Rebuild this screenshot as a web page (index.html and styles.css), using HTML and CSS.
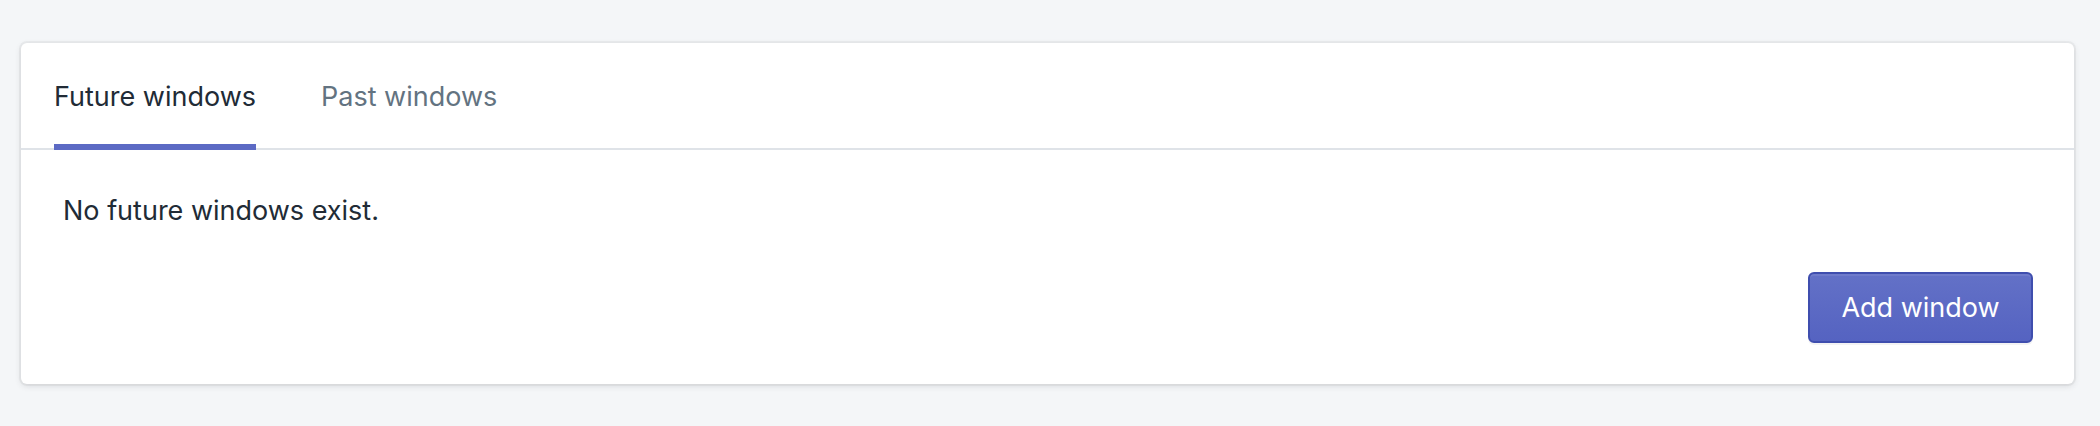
FILE: index.html
```html
<!DOCTYPE html>
<html>
<head>
<meta charset="utf-8">
<link rel="stylesheet" href="styles.css">
</head>
<body>
  <div class="page">
    <div class="card">
      <ul class="tabs">
        <li class="tab tab-selected"><span class="tab-title">Future windows</span></li>
        <li class="tab"><span class="tab-title">Past windows</span></li>
      </ul>
      <div class="section">
        <p class="empty">No future windows exist.</p>
        <div class="actions">
          <button class="btn-primary" type="button">Add window</button>
        </div>
      </div>
    </div>
  </div>
</body>
</html>
```
FILE: styles.css
```css
html, body {
  margin: 0;
  padding: 0;
  background: #f4f6f8;
}
body {
  font-family: Inter, "Noto Sans", "Liberation Sans", sans-serif;
  color: #212b36;
  width: 2100px;
  height: 426px;
  overflow: hidden;
}
.page {
  padding: 43px 26px 0 21px;
}
.card {
  background: #ffffff;
  border-radius: 6px;
  box-shadow: 0 0 0 2px rgba(63, 63, 68, 0.05), 0 2px 6px rgba(63, 63, 68, 0.15);
}
.tabs {
  list-style: none;
  margin: 0;
  padding: 0 0 0 33px;
  display: flex;
  gap: 65px;
  border-bottom: 2px solid #dfe3e8;
}
.tab {
  font-size: 27px;
  line-height: 40px;
  color: #637381;
  padding-top: 34px;
}
.tab-title {
  display: block;
  padding-bottom: 27px;
  border-bottom: 6px solid transparent;
  margin-bottom: -2px;
}
.tab-selected {
  color: #212b36;
}
.tab-selected .tab-title {
  border-bottom-color: #5c6ac4;
}
.section {
  padding: 41px 41px 41px 42px;
}
.empty {
  margin: 0;
  font-size: 27px;
  line-height: 40px;
}
.actions {
  display: flex;
  justify-content: flex-end;
  margin-top: 41px;
}
.btn-primary {
  font-family: inherit;
  font-size: 27px;
  line-height: 36px;
  color: #ffffff;
  background: linear-gradient(180deg, #6371c7, #5563c1);
  border: 2px solid #3f4eae;
  border-radius: 6px;
  box-shadow: inset 0 2px 0 0 #6f7bcb, 0 2px 0 0 rgba(22, 29, 37, 0.05);
  height: 71px;
  width: 225px;
  padding: 0;
}
```
